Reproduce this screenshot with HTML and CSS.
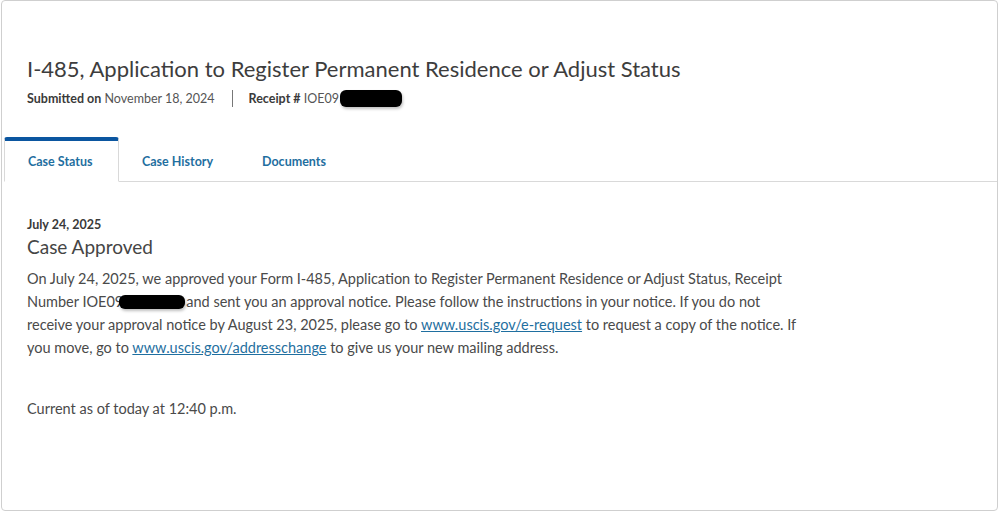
FILE: index.html
```html
<!DOCTYPE html>
<html lang="en">
<head>
<meta charset="utf-8">
<title>Case Status</title>
<link rel="stylesheet" href="styles.css">
</head>
<body>
<div class="card">
  <header class="head">
    <h1 class="title">I-485, Application to Register Permanent Residence or Adjust Status</h1>
    <div class="meta">
      <span class="meta-item"><b>Submitted on</b> November 18, 2024</span>
      <span class="divider"></span>
      <span class="meta-item"><b>Receipt #</b> IOE09<span class="redact redact-top"></span></span>
    </div>
  </header>
  <nav class="tabs">
    <a class="tab active">Case Status</a>
    <a class="tab tab-history">Case History</a>
    <a class="tab">Documents</a>
    <span class="tab-fill"></span>
  </nav>
  <section class="body">
    <div class="date">July 24, 2025</div>
    <h2 class="status">Case Approved</h2>
    <p class="desc">On July 24, 2025, we approved your Form I-485, Application to Register Permanent Residence or Adjust Status, Receipt Number IOE09<span class="redact redact-inline"></span>and sent you an approval notice. Please follow the instructions in your notice. If you do not receive your approval notice by August 23, 2025, please go to <a class="link">www.uscis.gov/e-request</a> to request a copy of the notice. If you move, go to <a class="link">www.uscis.gov/addresschange</a> to give us your new mailing address.</p>
    <p class="current">Current as of today at 12:40 p.m.</p>
  </section>
</div>
</body>
</html>
```

FILE: styles.css
```css
* { box-sizing: border-box; }
html, body { margin: 0; padding: 0; background: #fff; }
body {
  font-family: Lato, "Source Sans Pro", "Noto Sans", sans-serif;
  color: #454545;
  width: 1000px;
  height: 512px;
  overflow: hidden;
}
.card {
  margin: 0 2px 0 1px;
  height: 511px;
  border: 1px solid #cfcfcf;
  border-radius: 4px;
  background: #fff;
}
.head { padding: 54px 0 0 25px; }
.title {
  margin: 0;
  font-size: 22px;
  font-weight: 400;
  line-height: 28px;
  color: #3d3d3d;
}
.meta {
  display: flex;
  align-items: center;
  margin-top: 5px;
  font-size: 12.5px;
  color: #555;
  height: 20px;
}
.meta b { color: #3a3a3a; font-weight: 700; }
.divider {
  width: 1px;
  height: 17px;
  background: #777;
  margin: 0 16px 0 17px;
}
.meta-item { display: inline-flex; align-items: center; white-space: pre; }
.redact {
  display: inline-block;
  background: #000;
  border-radius: 6px;
  box-shadow: 1px 2px 3px rgba(0,0,0,0.25);
  vertical-align: middle;
}
.redact-top { width: 62px; height: 17px; margin-left: 1px; }
.redact-inline { width: 66px; height: 14px; margin: 0 1px 0 -4px; position: relative; top: -1px; }
.tabs {
  display: flex;
  align-items: flex-end;
  margin-top: 29px;
  padding-left: 2px;
}
.tab {
  display: flex;
  align-items: center;
  height: 45px;
  font-size: 12.5px;
  font-weight: 700;
  color: #1f6fa0;
  padding: 0 23px;
  border-top: 4px solid transparent;
  border-bottom: 1px solid #d9d9d9;
}
.tab.active {
  width: 115px;
  padding: 0 0 0 23px;
  border: 1px solid #d9d9d9;
  border-top: 4px solid #0b56a0;
  border-bottom: 1px solid #fff;
  border-radius: 3px 3px 0 0;
}
.tab-history { padding: 0 0 0 23px; width: 120px; }
.tab-fill { flex: 1; border-bottom: 1px solid #d9d9d9; height: 45px; }
.body { padding: 35px 0 0 25px; }
.date {
  font-size: 12.5px;
  font-weight: 700;
  color: #3a3a3a;
  line-height: 16px;
}
.status {
  margin: 2px 0 0;
  font-size: 19px;
  font-weight: 400;
  line-height: 24px;
  color: #454545;
}
.desc {
  margin: 8px 0 0;
  width: 770px;
  font-size: 14.5px;
  line-height: 23px;
  color: #4a4a4a;
}
.link { color: #1f6fa0; text-decoration: underline; }
.current {
  margin: 38px 0 0;
  font-size: 14.5px;
  line-height: 23px;
  color: #4a4a4a;
}
```
